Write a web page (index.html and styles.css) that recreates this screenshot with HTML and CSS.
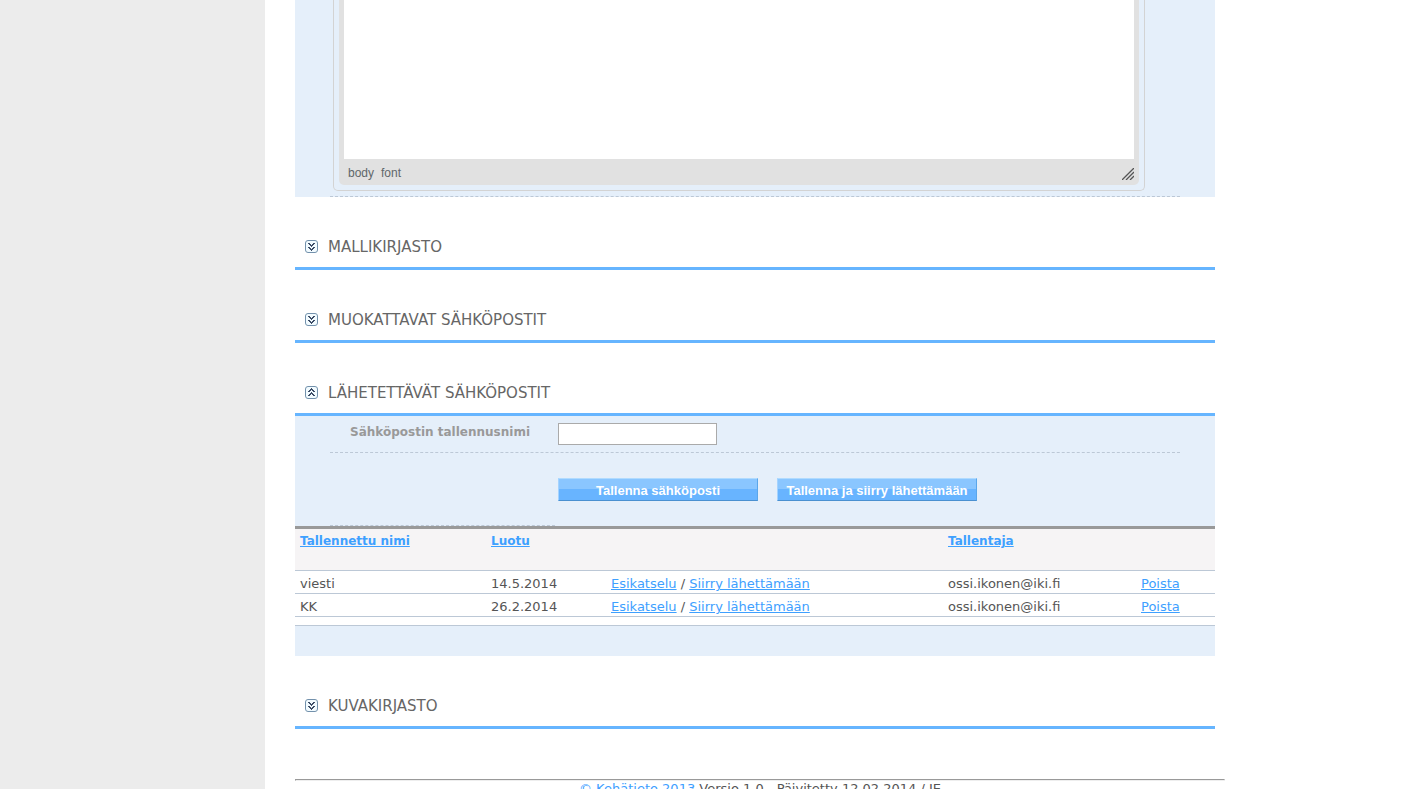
FILE: index.html
```html
<!DOCTYPE html>
<html lang="fi">
<head>
<meta charset="utf-8">
<title>Sähköpostit</title>
<link rel="stylesheet" href="styles.css">
</head>
<body>
<svg width="0" height="0" class="defs" aria-hidden="true">
  <symbol id="box" viewBox="0 0 13 13">
    <rect x=".5" y=".5" width="12" height="12" rx="2.5" fill="#f2fbff" stroke="#7391ac"/>
  </symbol>
  <symbol id="chev" viewBox="0 0 13 13">
    <path d="M3 3h2v1h1v1h1v-1h1v-1h2v1h-1v1h-1v1h-1v1h-1v-1h-1v-1h-1v-1h-1zM3 7h2v1h1v1h1v-1h1v-1h2v1h-1v1h-1v1h-1v1h-1v-1h-1v-1h-1v-1h-1z" fill="#3c4c66"/>
  </symbol>
</svg>
<div class="shell">
  <aside class="sidebar"></aside>
  <main class="main">
    <div class="content">
      <section class="panel editor-panel">
        <div class="editor-row">
          <div class="editor">
            <div class="editor-inner">
              <textarea class="editor-text" aria-label="Viesti"></textarea>
              <div class="editor-foot">
                <a class="path" href="#">body</a><a class="path" href="#">font</a>
                <svg class="grip" width="12" height="12" viewBox="0 0 12 12"><path d="M0 12L12 0M4 12L12 4M8 12L12 8" stroke="#555" stroke-width="1.3" fill="none"/></svg>
              </div>
            </div>
          </div>
        </div>
      </section>

      <h2 class="heading"><button class="toggle" type="button" aria-label="Avaa"><svg class="icon" width="13" height="13"><use href="#box"/><use href="#chev"/></svg></button>MALLIKIRJASTO</h2>
      <h2 class="heading"><button class="toggle" type="button" aria-label="Avaa"><svg class="icon" width="13" height="13"><use href="#box"/><use href="#chev"/></svg></button>MUOKATTAVAT SÄHKÖPOSTIT</h2>
      <h2 class="heading"><button class="toggle" type="button" aria-label="Sulje"><svg class="icon flip" width="13" height="13"><use href="#box"/><use href="#chev"/></svg></button>LÄHETETTÄVÄT SÄHKÖPOSTIT</h2>

      <form class="panel form">
        <div class="name-row">
          <label class="label" for="name">Sähköpostin tallennusnimi</label>
          <input class="field" id="name" type="text">
        </div>
        <div class="actions">
          <button class="btn" type="button">Tallenna sähköposti</button>
          <button class="btn" type="button">Tallenna ja siirry lähettämään</button>
        </div>
        <div class="short-rule"></div>
      </form>

      <table class="list">
        <colgroup><col class="c-name"><col class="c-date"><col class="c-act"><col class="c-user"><col class="c-del"></colgroup>
        <thead>
          <tr><th><a href="#">Tallennettu nimi</a></th><th><a href="#">Luotu</a></th><th></th><th><a href="#">Tallentaja</a></th><th></th></tr>
        </thead>
        <tbody>
          <tr><td>viesti</td><td>14.5.2014</td><td><a href="#">Esikatselu</a> / <a href="#">Siirry lähettämään</a></td><td>ossi.ikonen@iki.fi</td><td><a href="#">Poista</a></td></tr>
          <tr><td>KK</td><td>26.2.2014</td><td><a href="#">Esikatselu</a> / <a href="#">Siirry lähettämään</a></td><td>ossi.ikonen@iki.fi</td><td><a href="#">Poista</a></td></tr>
        </tbody>
      </table>
      <div class="list-end"></div>

      <h2 class="heading"><button class="toggle" type="button" aria-label="Avaa"><svg class="icon" width="13" height="13"><use href="#box"/><use href="#chev"/></svg></button>KUVAKIRJASTO</h2>
    </div>
    <footer class="footer">
      <hr class="rule">
      <a class="plain" href="#">© Kehätieto 2013</a> Versio 1.0 - Päivitetty 12.02.2014 / IE
    </footer>
  </main>
</div>
</body>
</html>
```
FILE: styles.css
```css
* { box-sizing: border-box; }
body {
  margin: 0;
  background: #fff;
  color: #555;
  font: 13px/18px Verdana, "DejaVu Sans", sans-serif;
}
a { color: #3ea0ff; }
.defs { position: absolute; }
.shell { display: flex; height: 100vh; overflow: hidden; }
.sidebar { flex: 0 0 265px; background: #ececec; }
.main { flex: 1; min-width: 0; padding-left: 30px; }
.content { max-width: 920px; }
.panel { background: #e5effa; }

.editor-panel { padding: 0 35px; }
.editor-row { padding: 0 35px 5px 3px; border-bottom: 1px dashed #bcc8d6; }
.editor {
  padding: 0 5px 5px;
  border: 1px solid #d3d3d3;
  border-top: 0;
  border-radius: 0 0 5px 5px;
}
.editor-inner { padding: 0 5px; background: #e1e1e1; border-radius: 0 0 5px 5px; }
.editor-text {
  display: block;
  width: 100%;
  height: 159px;
  border: 0;
  background: #fff;
  resize: none;
}
.editor-foot { display: flex; align-items: center; height: 26px; padding: 2px 0 0 4px; }
.path { margin-right: 7px; color: #60676a; font: 12px/16px "Liberation Sans", Arial, sans-serif; text-decoration: none; }
.grip { margin: 2px 0 0 auto; }

.heading {
  display: flex;
  align-items: center;
  gap: 10px;
  height: 41px;
  margin: 29px 0 0;
  padding-left: 10px;
  box-sizing: content-box;
  border-bottom: 3px solid #66b5ff;
  color: #666;
  font: 15px/20px Verdana, "DejaVu Sans", sans-serif;
}
.toggle { padding: 0; border: 0; background: none; }
.icon { display: block; }
.flip { transform: rotate(180deg); }

.form { padding: 0 35px; }
.name-row {
  display: flex;
  align-items: flex-start;
  gap: 28px;
  padding: 7px 0;
  border-bottom: 1px dashed #bcc8d6;
}
.label { width: 200px; color: #999; font-size: 12px; font-weight: bold; text-align: right; }
.field { width: 159px; height: 22px; border: 1px solid #aaa; background: #fff; }
.actions { display: flex; gap: 19px; padding: 25px 0 24px 228px; }
.btn {
  width: 200px;
  height: 23px;
  padding: 2px 0 0;
  border: 1px solid;
  border-color: #b0dbff #5aa6ea #4a90d0 #a4d3ff;
  background: linear-gradient(#8ac6ff 50%, #68b4ff 50%);
  color: #fff;
  font: bold 13px/19px "Liberation Sans", Arial, sans-serif;
  white-space: nowrap;
}
.short-rule { width: 225px; border-bottom: 1px dashed #bcc8d6; }

.list { width: 100%; border-collapse: separate; border-spacing: 0; table-layout: fixed; border-top: 3px solid #999; }
.c-name { width: 191px; }
.c-date { width: 120px; }
.c-act { width: 337px; }
.c-user { width: 193px; }
.list th {
  height: 42px;
  padding: 3px 5px;
  background: #f6f4f5;
  border-bottom: 1px solid #bcc8d6;
  font-size: 12px;
  text-align: left;
  vertical-align: top;
}
.list td { height: 23px; padding: 4px 5px 0; border-bottom: 1px solid #bcc8d6; white-space: nowrap; }
.list-end { height: 31px; margin-top: 8px; border-top: 1px solid #bcc8d6; background: #e5effa; }

.footer { max-width: 930px; margin-top: 50px; line-height: 16px; text-align: center; }
.rule { height: 2px; margin: 0; border: 1px solid #999; border-right-color: #eee; border-bottom-color: #eee; }
.plain { text-decoration: none; }
```
